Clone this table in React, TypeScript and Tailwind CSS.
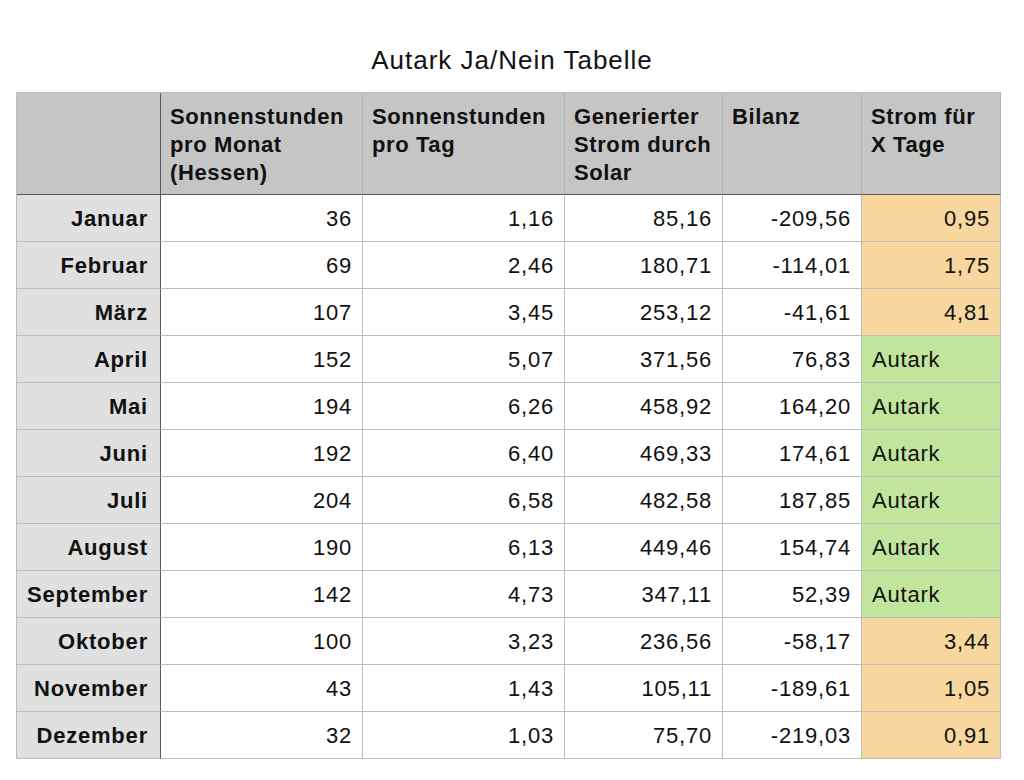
import React from "react";

type Row = { m: string; a: string; b: string; c: string; d: string; e: string; ok: boolean };

const rows: Row[] = [
  { m: "Januar", a: "36", b: "1,16", c: "85,16", d: "-209,56", e: "0,95", ok: false },
  { m: "Februar", a: "69", b: "2,46", c: "180,71", d: "-114,01", e: "1,75", ok: false },
  { m: "März", a: "107", b: "3,45", c: "253,12", d: "-41,61", e: "4,81", ok: false },
  { m: "April", a: "152", b: "5,07", c: "371,56", d: "76,83", e: "Autark", ok: true },
  { m: "Mai", a: "194", b: "6,26", c: "458,92", d: "164,20", e: "Autark", ok: true },
  { m: "Juni", a: "192", b: "6,40", c: "469,33", d: "174,61", e: "Autark", ok: true },
  { m: "Juli", a: "204", b: "6,58", c: "482,58", d: "187,85", e: "Autark", ok: true },
  { m: "August", a: "190", b: "6,13", c: "449,46", d: "154,74", e: "Autark", ok: true },
  { m: "September", a: "142", b: "4,73", c: "347,11", d: "52,39", e: "Autark", ok: true },
  { m: "Oktober", a: "100", b: "3,23", c: "236,56", d: "-58,17", e: "3,44", ok: false },
  { m: "November", a: "43", b: "1,43", c: "105,11", d: "-189,61", e: "1,05", ok: false },
  { m: "Dezember", a: "32", b: "1,03", c: "75,70", d: "-219,03", e: "0,91", ok: false },
];

const headers: React.ReactNode[] = [
  "",
  <>Sonnenstunden<br />pro Monat<br />(Hessen)</>,
  <>Sonnenstunden<br />pro Tag</>,
  <>Generierter<br />Strom durch<br />Solar</>,
  <>Bilanz</>,
  <>Strom für<br />X Tage</>,
];

export default function App() {
  return (
    <div
      className="w-[1024px] h-[780px] bg-white text-[#111] flex flex-col items-start"
      style={{ fontFamily: '"Liberation Sans", Arial, Helvetica, sans-serif' }}
    >
      <div className="w-full pt-[44px] h-[76px] leading-[32px] text-[26px] tracking-[1px] text-center">
        Autark Ja/Nein Tabelle
      </div>
      <div className="mt-[16px] ml-[16px] grid grid-cols-[144px_202px_202px_158px_139px_139px] border-l border-t border-[#bdbdbd]">
        {headers.map((h, i) => (
          <div
            key={i}
            className={`h-[102px] bg-[#c5c5c5] border-b border-b-[#5a5a5a] ${
              i === 0 ? "border-r border-r-[#5a5a5a]" : "border-r border-r-[#b3b3b3]"
            } pl-[9px] pt-[10px] text-[22px] leading-[28px] tracking-[0.6px] font-bold`}
          >
            {h}
          </div>
        ))}
        {rows.map((r) => (
          <React.Fragment key={r.m}>
            <div className="h-[47px] bg-[#e0e0e0] border-b border-b-[#bdbdbd] border-r border-r-[#5a5a5a] flex items-center justify-end pr-[12px] text-[22px] tracking-[0.8px] font-bold">
              {r.m}
            </div>
            {[r.a, r.b, r.c, r.d].map((v, j) => (
              <div
                key={j}
                className="h-[47px] bg-white border-b border-r border-[#bdbdbd] flex items-center justify-end pr-[10px] text-[22px] tracking-[0.8px]"
              >
                {v}
              </div>
            ))}
            <div
              className={`h-[47px] border-b border-r border-[#bdbdbd] flex items-center text-[22px] tracking-[0.8px] ${
                r.ok ? "bg-[#c1e59d] justify-start pl-[10px]" : "bg-[#f8d79e] justify-end pr-[10px]"
              }`}
            >
              {r.e}
            </div>
          </React.Fragment>
        ))}
      </div>
    </div>
  );
}
